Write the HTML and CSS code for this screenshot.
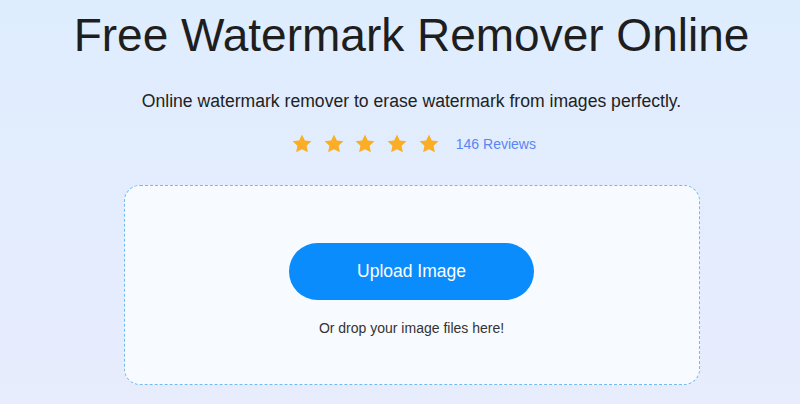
FILE: index.html
```html
<!DOCTYPE html>
<html>
<head>
  <title>Free Watermark Remover Online</title>
  <link rel="stylesheet" href="styles.css">
</head>
<body>
  <div class="hero">
    <h1 class="title">Free Watermark Remover Online</h1>
    <p class="sub">Online watermark remover to erase watermark from images perfectly.</p>
    <div class="rating">
      <div class="stars">
        <svg viewBox="0 0 24 24"><path d="M12 1.5l3.1 6.6 7.2.9-5.3 5 1.4 7.1L12 17.6l-6.4 3.5L7 14l-5.3-5 7.2-.9z"/></svg>
        <svg viewBox="0 0 24 24"><path d="M12 1.5l3.1 6.6 7.2.9-5.3 5 1.4 7.1L12 17.6l-6.4 3.5L7 14l-5.3-5 7.2-.9z"/></svg>
        <svg viewBox="0 0 24 24"><path d="M12 1.5l3.1 6.6 7.2.9-5.3 5 1.4 7.1L12 17.6l-6.4 3.5L7 14l-5.3-5 7.2-.9z"/></svg>
        <svg viewBox="0 0 24 24"><path d="M12 1.5l3.1 6.6 7.2.9-5.3 5 1.4 7.1L12 17.6l-6.4 3.5L7 14l-5.3-5 7.2-.9z"/></svg>
        <svg viewBox="0 0 24 24"><path d="M12 1.5l3.1 6.6 7.2.9-5.3 5 1.4 7.1L12 17.6l-6.4 3.5L7 14l-5.3-5 7.2-.9z"/></svg>
      </div>
      <a class="reviews" href="#">146 Reviews</a>
    </div>
    <div class="drop">
      <button class="upload">Upload Image</button>
      <div class="hint">Or drop your image files here!</div>
    </div>
  </div>
</body>
</html>
```

FILE: styles.css
```css
body {
  margin: 0; font-family: 'Liberation Sans', Arial, sans-serif;
  background: linear-gradient(180deg, #deedfe, #e8ecfd);
  height: 404px; overflow: hidden;
  color: #222;
}
.hero {
  display: flex; flex-direction: column; align-items: center;
  padding-left: 23px;
}
.title {
  margin: 8px 0 0; font-size: 46px; font-weight: normal;
  color: #1e1e1e; line-height: 54px;
}
.sub {
  margin: 29px 0 0; font-size: 17.6px; line-height: 20px;
  color: #222;
}
.rating {
  display: flex; align-items: center;
  margin-top: 22px; margin-left: 4px;
}
.stars {
  display: flex; gap: 9.7px;
}
.stars svg {
  width: 22px; height: 22px; fill: #fbae25;
}
.reviews {
  margin-left: 16px; font-size: 14px;
  color: #5b85f2; text-decoration: none;
}
.drop {
  margin-top: 30px;
  width: 574px; height: 198px;
  border: 1px dashed #72baf6; border-radius: 16px;
  background: #f7faff;
  display: flex; flex-direction: column; align-items: center;
}
.upload {
  margin-top: 57px;
  width: 245px; height: 57px;
  border: none; border-radius: 29px;
  background: #0a8cfd; color: #fff;
  font-family: inherit; font-size: 17.5px;
}
.hint {
  margin-top: 20px; font-size: 14px; color: #333;
}
```
